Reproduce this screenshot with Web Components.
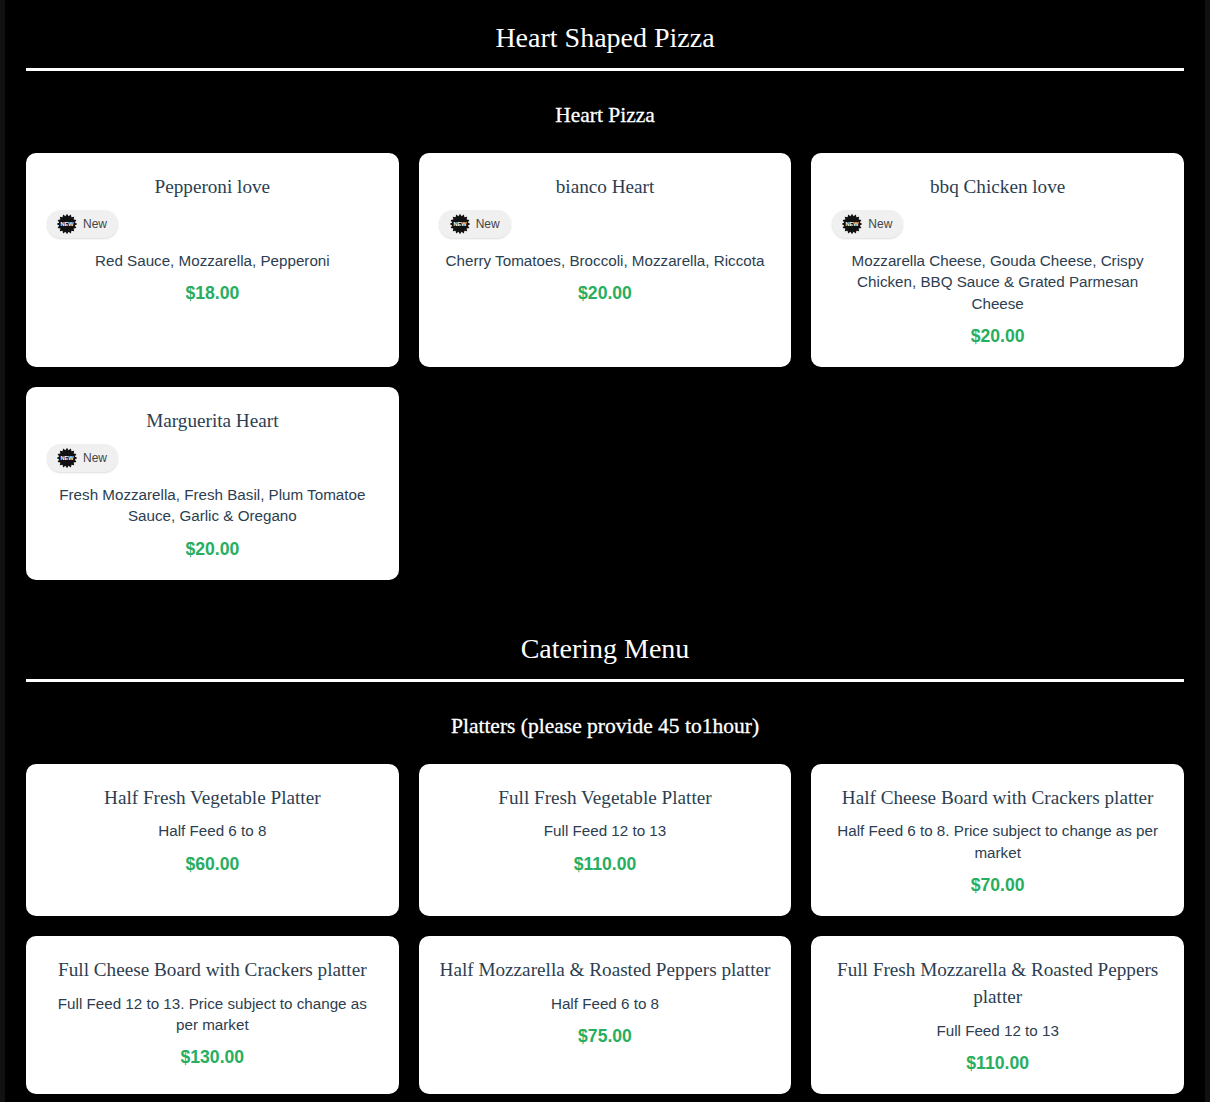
<!DOCTYPE html>
<html>
<head>
<meta charset="utf-8">
<title>Menu</title>
<style>
  html, body { margin: 0; background: #111; }
  body { font-family: "Liberation Sans", Arial, sans-serif; }
</style>
</head>
<body>
<menu-page>
  <menu-section heading="Heart Shaped Pizza">
    <menu-group heading="Heart Pizza">
      <menu-card name="Pepperoni love" price="$18.00" fresh>Red Sauce, Mozzarella, Pepperoni</menu-card>
      <menu-card name="bianco Heart" price="$20.00" fresh>Cherry Tomatoes, Broccoli, Mozzarella, Riccota</menu-card>
      <menu-card name="bbq Chicken love" price="$20.00" fresh>Mozzarella Cheese, Gouda Cheese, Crispy Chicken, BBQ Sauce &amp; Grated Parmesan Cheese</menu-card>
      <menu-card name="Marguerita Heart" price="$20.00" fresh>Fresh Mozzarella, Fresh Basil, Plum Tomatoe Sauce, Garlic &amp; Oregano</menu-card>
    </menu-group>
  </menu-section>
  <menu-section heading="Catering Menu">
    <menu-group heading="Platters (please provide 45 to1hour)">
      <menu-card name="Half Fresh Vegetable Platter" price="$60.00">Half Feed 6 to 8</menu-card>
      <menu-card name="Full Fresh Vegetable Platter" price="$110.00">Full Feed 12 to 13</menu-card>
      <menu-card name="Half Cheese Board with Crackers platter" price="$70.00">Half Feed 6 to 8. Price subject to change as per market</menu-card>
      <menu-card name="Full Cheese Board with Crackers platter" price="$130.00">Full Feed 12 to 13. Price subject to change as per market</menu-card>
      <menu-card name="Half Mozzarella &amp; Roasted Peppers platter" price="$75.00">Half Feed 6 to 8</menu-card>
      <menu-card name="Full Fresh Mozzarella &amp; Roasted Peppers platter" price="$110.00">Full Feed 12 to 13</menu-card>
    </menu-group>
  </menu-section>
</menu-page>

<script>
const pageTemplate = document.createElement('template');
pageTemplate.innerHTML = `
<style>
  :host {
    display: block;
    margin: 0 5px;
    padding: 0 21px 8px;
    background: #000;
  }
</style>
<slot></slot>`;

class MenuPage extends HTMLElement {
  constructor() {
    super();
    this.attachShadow({mode: 'open'});
    this.shadowRoot.appendChild(pageTemplate.content.cloneNode(true));
  }
}

const sectionTemplate = document.createElement('template');
sectionTemplate.innerHTML = `
<style>
  :host {
    display: block;
    padding-bottom: 31.12px;
  }
  :host(:last-child) {
    padding-bottom: 0;
  }
  h1 {
    margin: 0;
    padding: 19px 0 11px;
    border-bottom: 3px solid #fff;
    color: #fff;
    font: 400 28px/38px "Liberation Serif", "Times New Roman", serif;
    text-align: center;
  }
</style>
<h1 id="heading"></h1>
<slot></slot>`;

class MenuSection extends HTMLElement {
  constructor() {
    super();
    this.attachShadow({mode: 'open'});
    this.shadowRoot.appendChild(sectionTemplate.content.cloneNode(true));
  }

  connectedCallback() {
    this.shadowRoot.querySelector('#heading').textContent = this.getAttribute('heading');
  }
}

const groupTemplate = document.createElement('template');
groupTemplate.innerHTML = `
<style>
  :host {
    display: block;
  }
  h2 {
    margin: 0;
    padding: 29px 0 23px;
    color: #fff;
    font: 400 21.5px/30px "Liberation Serif", "Times New Roman", serif;
    -webkit-text-stroke: .3px #fff;
    text-align: center;
  }
  .grid {
    display: grid;
    grid-template-columns: repeat(3, 1fr);
    gap: 20px;
  }
</style>
<h2 id="heading"></h2>
<div class="grid"><slot></slot></div>`;

class MenuGroup extends HTMLElement {
  constructor() {
    super();
    this.attachShadow({mode: 'open'});
    this.shadowRoot.appendChild(groupTemplate.content.cloneNode(true));
  }

  connectedCallback() {
    this.shadowRoot.querySelector('#heading').textContent = this.getAttribute('heading');
  }
}

const badgeTemplate = document.createElement('template');
badgeTemplate.innerHTML = `
<style>
  :host {
    display: inline-flex;
    align-items: center;
    gap: 6px;
    height: 28px;
    padding: 0 11px 0 10.5px;
    margin-left: .5px;
    box-sizing: border-box;
    border-radius: 14px;
    background: #f0f0f0;
    box-shadow: 0 1px 2px rgba(0, 0, 0, .14);
    color: #444;
    font: 12px/14px "Liberation Sans", Arial, sans-serif;
  }
  svg {
    display: block;
    width: 20px;
    height: 20px;
  }
  text {
    fill: #fff;
    font: 700 5.6px "Liberation Sans", Arial, sans-serif;
    text-anchor: middle;
  }
</style>
<svg viewBox="0 0 20 20" aria-hidden="true">
  <polygon id="burst" fill="#111"></polygon>
  <text x="10" y="12">NEW</text>
</svg>
<span>New</span>`;

class NewBadge extends HTMLElement {
  constructor() {
    super();
    this.attachShadow({mode: 'open'});
    this.shadowRoot.appendChild(badgeTemplate.content.cloneNode(true));
  }

  connectedCallback() {
    // 16 point starburst
    const points = [];
    for (let i = 0; i < 32; i++) {
      const r = i % 2 ? 8 : 10.2;
      const a = i * Math.PI / 16;
      points.push((10 + r * Math.cos(a)).toFixed(2) + ',' + (10 + r * Math.sin(a)).toFixed(2));
    }
    this.shadowRoot.querySelector('#burst').setAttribute('points', points.join(' '));
  }
}

const cardTemplate = document.createElement('template');
cardTemplate.innerHTML = `
<style>
  :host {
    display: block;
    padding: 20px;
    border-radius: 10px;
    background: #fff;
    text-align: center;
  }
  h3 {
    margin: 0 0 9.72px;
    color: #2c3e50;
    font: 400 19.2px/27px "Liberation Serif", "Times New Roman", serif;
  }
  .badge {
    display: flex;
    margin-bottom: 12.28px;
  }
  .badge[hidden] {
    display: none;
  }
  p {
    margin: 0 0 11.12px;
    color: #2c3e50;
    font: 15.2px/21.28px "Liberation Sans", Arial, sans-serif;
  }
  .price {
    color: #27ae60;
    font: 700 17.6px/22px "Liberation Sans", Arial, sans-serif;
  }
</style>
<h3 id="name"></h3>
<div class="badge" id="badge" hidden><new-badge></new-badge></div>
<p><slot></slot></p>
<div class="price" id="price"></div>`;

class MenuCard extends HTMLElement {
  constructor() {
    super();
    this.attachShadow({mode: 'open'});
    this.shadowRoot.appendChild(cardTemplate.content.cloneNode(true));
  }

  connectedCallback() {
    this.shadowRoot.querySelector('#name').textContent = this.getAttribute('name');
    this.shadowRoot.querySelector('#price').textContent = this.getAttribute('price');
    this.shadowRoot.querySelector('#badge').hidden = !this.hasAttribute('fresh');
  }
}

window.customElements.define('new-badge', NewBadge);
window.customElements.define('menu-card', MenuCard);
window.customElements.define('menu-group', MenuGroup);
window.customElements.define('menu-section', MenuSection);
window.customElements.define('menu-page', MenuPage);
</script>
</body>
</html>
